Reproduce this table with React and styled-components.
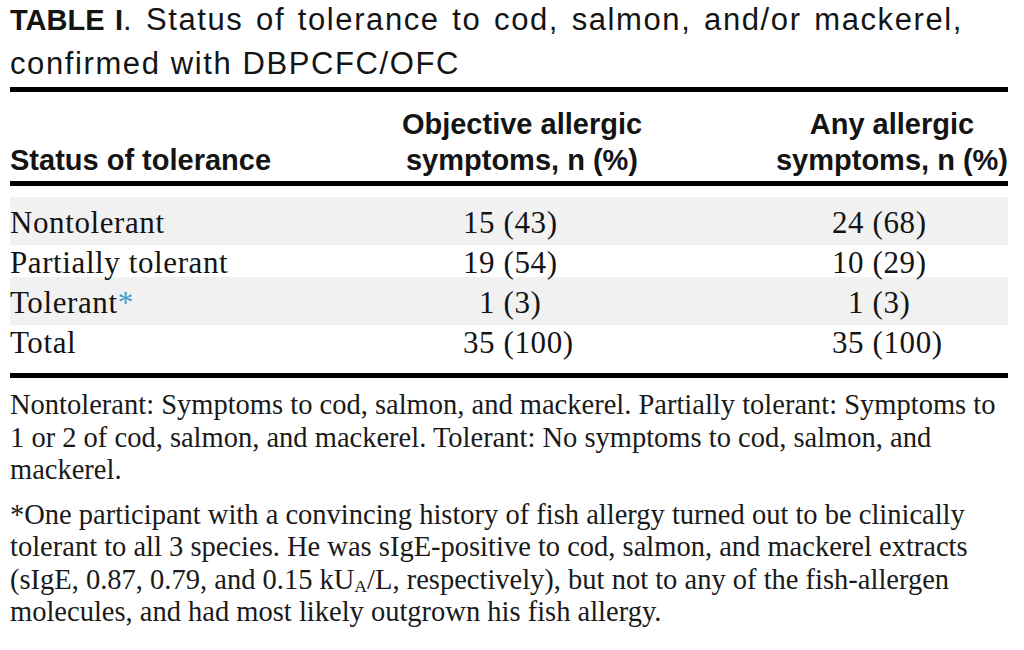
import React from 'react';
import styled, { createGlobalStyle, css } from 'styled-components';

const GlobalStyle = createGlobalStyle`
  html, body {
    margin: 0;
    padding: 0;
    background: #fff;
  }
  body {
    width: 1024px;
    height: 650px;
    overflow: hidden;
  }
`;

const Page = styled.main`
  box-sizing: border-box;
  width: 1024px;
  padding: 0 16px 0 10px;
  color: #141414;
`;

const Caption = styled.h1`
  margin: -2px 0 0;
  width: 953px;
  font-family: "Liberation Sans", Arial, sans-serif;
  font-size: 31px;
  font-weight: normal;
  line-height: 44px;
  letter-spacing: 1.6px;
  text-align: justify;

  b {
    font-size: 29px;
    font-weight: bold;
    letter-spacing: 0;
  }
`;

const Table = styled.section`
  width: 998px;
  margin-top: 1px;
  border-top: 5px solid #000;
  border-bottom: 5px solid #000;
`;

const HeadRow = styled.div`
  display: grid;
  grid-template-columns: 382px 260px 1fr;
  align-items: end;
  height: 86px;
  padding-bottom: 3px;
  border-bottom: 5px solid #000;
  font-family: "Liberation Sans", Arial, sans-serif;
  font-weight: bold;
  font-size: 29px;
  line-height: 36px;
  white-space: nowrap;
`;

const HeadCell = styled.div`
  text-align: ${(p) => p.$align || 'left'};
  justify-self: ${(p) => p.$justify || 'stretch'};
`;

const Body = styled.div`
  padding: 17px 0 10px;
  font-family: "Liberation Serif", "Times New Roman", serif;
  font-size: 31px;
  line-height: 40px;
  letter-spacing: 0.6px;
`;

const Row = styled.div`
  display: grid;
  grid-template-columns: 453px 369px 1fr;

  ${(p) =>
    p.$shade &&
    css`
      background: #f1f1f1;
      padding: 6px 0 2px;
      margin: -6px 0 -2px;
    `}
`;

const Num = styled.span`
  padding-left: ${(p) => (p.$pad ? '0.52em' : '0')};
`;

const Star = styled.span`
  color: #3b9bd3;
`;

const Note = styled.p`
  margin: ${(p) => (p.$first ? '11px 0 0' : '12px 0 0')};
  font-family: "Liberation Serif", "Times New Roman", serif;
  font-size: 28.5px;
  line-height: 32.5px;
  color: #1a1a1a;
`;

const Sub = styled.sub`
  font-size: 0.62em;
  line-height: 0;
  vertical-align: -0.15em;
`;

const rows = [
  { label: 'Nontolerant', obj: '15 (43)', any: '24 (68)' },
  { label: 'Partially tolerant', obj: '19 (54)', any: '10 (29)' },
  { label: 'Tolerant', star: true, obj: '1 (3)', any: '1 (3)' },
  { label: 'Total', obj: '35 (100)', any: '35 (100)' },
];

const App = () => (
  <Page>
    <GlobalStyle />
    <Caption>
      <b>TABLE I</b>. Status of tolerance to cod, salmon, and/or mackerel,
      confirmed with DBPCFC/OFC
    </Caption>
    <Table>
      <HeadRow>
        <HeadCell>Status of tolerance</HeadCell>
        <HeadCell $align="center">
          Objective allergic
          <br />
          symptoms, n (%)
        </HeadCell>
        <HeadCell $align="center" $justify="end">
          Any allergic
          <br />
          symptoms, n (%)
        </HeadCell>
      </HeadRow>
      <Body>
        {rows.map((r, i) => (
          <Row key={r.label} $shade={i % 2 === 0}>
            <span>
              {r.label}
              {r.star && <Star>*</Star>}
            </span>
            <Num $pad={r.obj.indexOf(' ') === 1}>{r.obj}</Num>
            <Num $pad={r.any.indexOf(' ') === 1}>{r.any}</Num>
          </Row>
        ))}
      </Body>
    </Table>
    <Note $first>
      Nontolerant: Symptoms to cod, salmon, and mackerel. Partially tolerant: Symptoms to
      1 or 2 of cod, salmon, and mackerel. Tolerant: No symptoms to cod, salmon, and
      mackerel.
    </Note>
    <Note>
      *One participant with a convincing history of fish allergy turned out to be clinically
      tolerant to all 3 species. He was sIgE-positive to cod, salmon, and mackerel extracts
      (sIgE, 0.87, 0.79, and 0.15 kU<Sub>A</Sub>/L, respectively), but not to any of the
      fish-allergen molecules, and had most likely outgrown his fish allergy.
    </Note>
  </Page>
);

export default App;
